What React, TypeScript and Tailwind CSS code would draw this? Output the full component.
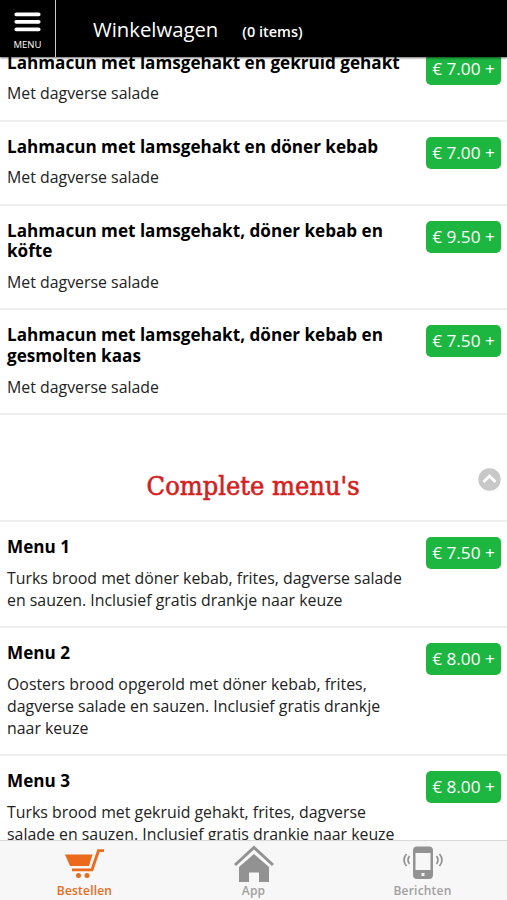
import { memo } from "react";

type MenuItem = {
  title: string;
  description: string;
  price: string;
};

const lahmacunItems: MenuItem[] = [
  { title: "Lahmacun met lamsgehakt en gekruid gehakt", description: "Met dagverse salade", price: "7.00" },
  { title: "Lahmacun met lamsgehakt en döner kebab", description: "Met dagverse salade", price: "7.00" },
  { title: "Lahmacun met lamsgehakt, döner kebab en köfte", description: "Met dagverse salade", price: "9.50" },
  { title: "Lahmacun met lamsgehakt, döner kebab en gesmolten kaas", description: "Met dagverse salade", price: "7.50" },
];

const completeMenus: MenuItem[] = [
  {
    title: "Menu 1",
    description: "Turks brood met döner kebab, frites, dagverse salade en sauzen. Inclusief gratis drankje naar keuze",
    price: "7.50",
  },
  {
    title: "Menu 2",
    description: "Oosters brood opgerold met döner kebab, frites, dagverse salade en sauzen. Inclusief gratis drankje naar keuze",
    price: "8.00",
  },
  {
    title: "Menu 3",
    description: "Turks brood met gekruid gehakt, frites, dagverse salade en sauzen. Inclusief gratis drankje naar keuze",
    price: "8.00",
  },
];

const MenuRow = memo(({ item }: { item: MenuItem }) => (
  <li className="flex items-start justify-between border-b-2 border-[#efefef] pt-[15px] pr-1.5 pb-[15.2px] pl-[7px]">
    <div className="w-[400px]">
      <h3 className="text-[17.13px] leading-[20.8px] font-bold text-black">{item.title}</h3>
      <p className="mt-[9px] text-[15.88px] leading-[22px] text-[#222]">{item.description}</p>
    </div>
    <button className="h-8 w-[75px] shrink-0 rounded-[5px] bg-[#1db640] text-[17.2px] leading-8 whitespace-nowrap text-white">
      € {item.price} +
    </button>
  </li>
));

MenuRow.displayName = "MenuRow";

const CartIcon = () => (
  <svg width="40" height="32" viewBox="0 0 40 32" fill="#eb6a1c">
    <path d="M0 6.500h27.500l-3.500 11.500H5z" />
    <path d="M39 2.700h-5.500L27 21.800H7" fill="none" stroke="#eb6a1c" strokeWidth="2.800" />
    <circle cx="13.500" cy="27.500" r="2.500" />
    <circle cx="22" cy="27.500" r="2.500" />
  </svg>
);

const HomeIcon = () => (
  <svg width="40" height="38" viewBox="0 0 40 38" fill="#929292">
    <path d="M1 20L20 2.500 39 20" fill="none" stroke="#929292" strokeWidth="3" />
    <path d="M20 9L35 22v15H25V27.500H15V37H5V22z" />
  </svg>
);

const PhoneIcon = () => (
  <svg width="40" height="34" viewBox="0 0 40 34" fill="none" stroke="#929292" strokeWidth="1.700">
    <path
      fillRule="evenodd"
      fill="#929292"
      stroke="none"
      d="M14 0.500h12a4 4 0 0 1 4 4v24.500a4 4 0 0 1-4 4H14a4 4 0 0 1-4-4V4.500a4 4 0 0 1 4-4zM12.500 7v17h15V7zM18.500 27v3h3v-3z"
    />
    <path d="M6.500 10q-3 4 0 8M3.500 8q-5 6 0 12M33.500 10q3 4 0 8M36.500 8q5 6 0 12" />
  </svg>
);

const TabBar = () => (
  <nav className="z-10 grid h-[60px] shrink-0 grid-cols-3 border-t border-[#d8d8d8] bg-[#f7f7f7] text-[12px] leading-4 font-semibold tracking-[0.2px] text-[#a0a0a0]">
    <a className="flex flex-col items-center justify-end pb-px text-[#eb6a1c]">
      <CartIcon />
      <span className="mt-[3px]">Bestellen</span>
    </a>
    <a className="flex flex-col items-center justify-end pb-px">
      <HomeIcon />
      <span>App</span>
    </a>
    <a className="flex flex-col items-center justify-end pb-px">
      <PhoneIcon />
      <span className="mt-[3px]">Berichten</span>
    </a>
  </nav>
);

export default function App() {
  return (
    <div className="flex h-[900px] w-[507px] flex-col overflow-hidden bg-white font-['Open_Sans',sans-serif]">
      <header className="z-10 flex h-[57px] shrink-0 bg-black text-white shadow-[0_1px_2px_rgba(0,0,0,0.6)]">
        <button className="flex w-14 flex-col items-center border-r border-[#ccc] pt-3">
          <svg width="27" height="20" viewBox="0 0 27 20" stroke="white" strokeWidth="3.800" strokeLinecap="round">
            <path d="M2.300 2.300h22.400M2.300 9.800h22.400M2.300 17.300h22.400" />
          </svg>
          <span className="mt-1.5 text-[9.500px] leading-[14px]">MENU</span>
        </button>
        <div className="flex items-baseline pt-[15px] pl-[37px]">
          <span className="text-[20.3px] leading-7 font-medium">Winkelwagen</span>
          <span className="ml-6 text-[14.5px] font-semibold">(0 items)</span>
        </div>
      </header>

      <main className="min-h-0 flex-1 overflow-hidden">
        <ul className="-mt-[19.4px]">
          {lahmacunItems.map((item) => (
            <MenuRow key={item.title} item={item} />
          ))}
        </ul>

        <div className="relative flex h-[106.6px] items-center justify-center border-b-2 border-[#efefef] pt-[37px]">
          <h2 className="origin-center scale-x-[0.95] font-['DejaVu_Serif',serif] text-[25.5px] whitespace-nowrap text-[#d52020] [-webkit-text-stroke:0.6px_#d52020]">
            Complete menu's
          </h2>
          <svg className="absolute top-[53px] right-1.5" width="23" height="23" viewBox="0 0 23 23">
            <circle cx="11.500" cy="11.500" r="11.200" fill="#c8c8c8" />
            <path d="M5.500 14l6-6 6 6" fill="none" stroke="white" strokeWidth="2.800" />
          </svg>
        </div>

        <ul>
          {completeMenus.map((item) => (
            <MenuRow key={item.title} item={item} />
          ))}
        </ul>
      </main>

      <TabBar />
    </div>
  );
}
